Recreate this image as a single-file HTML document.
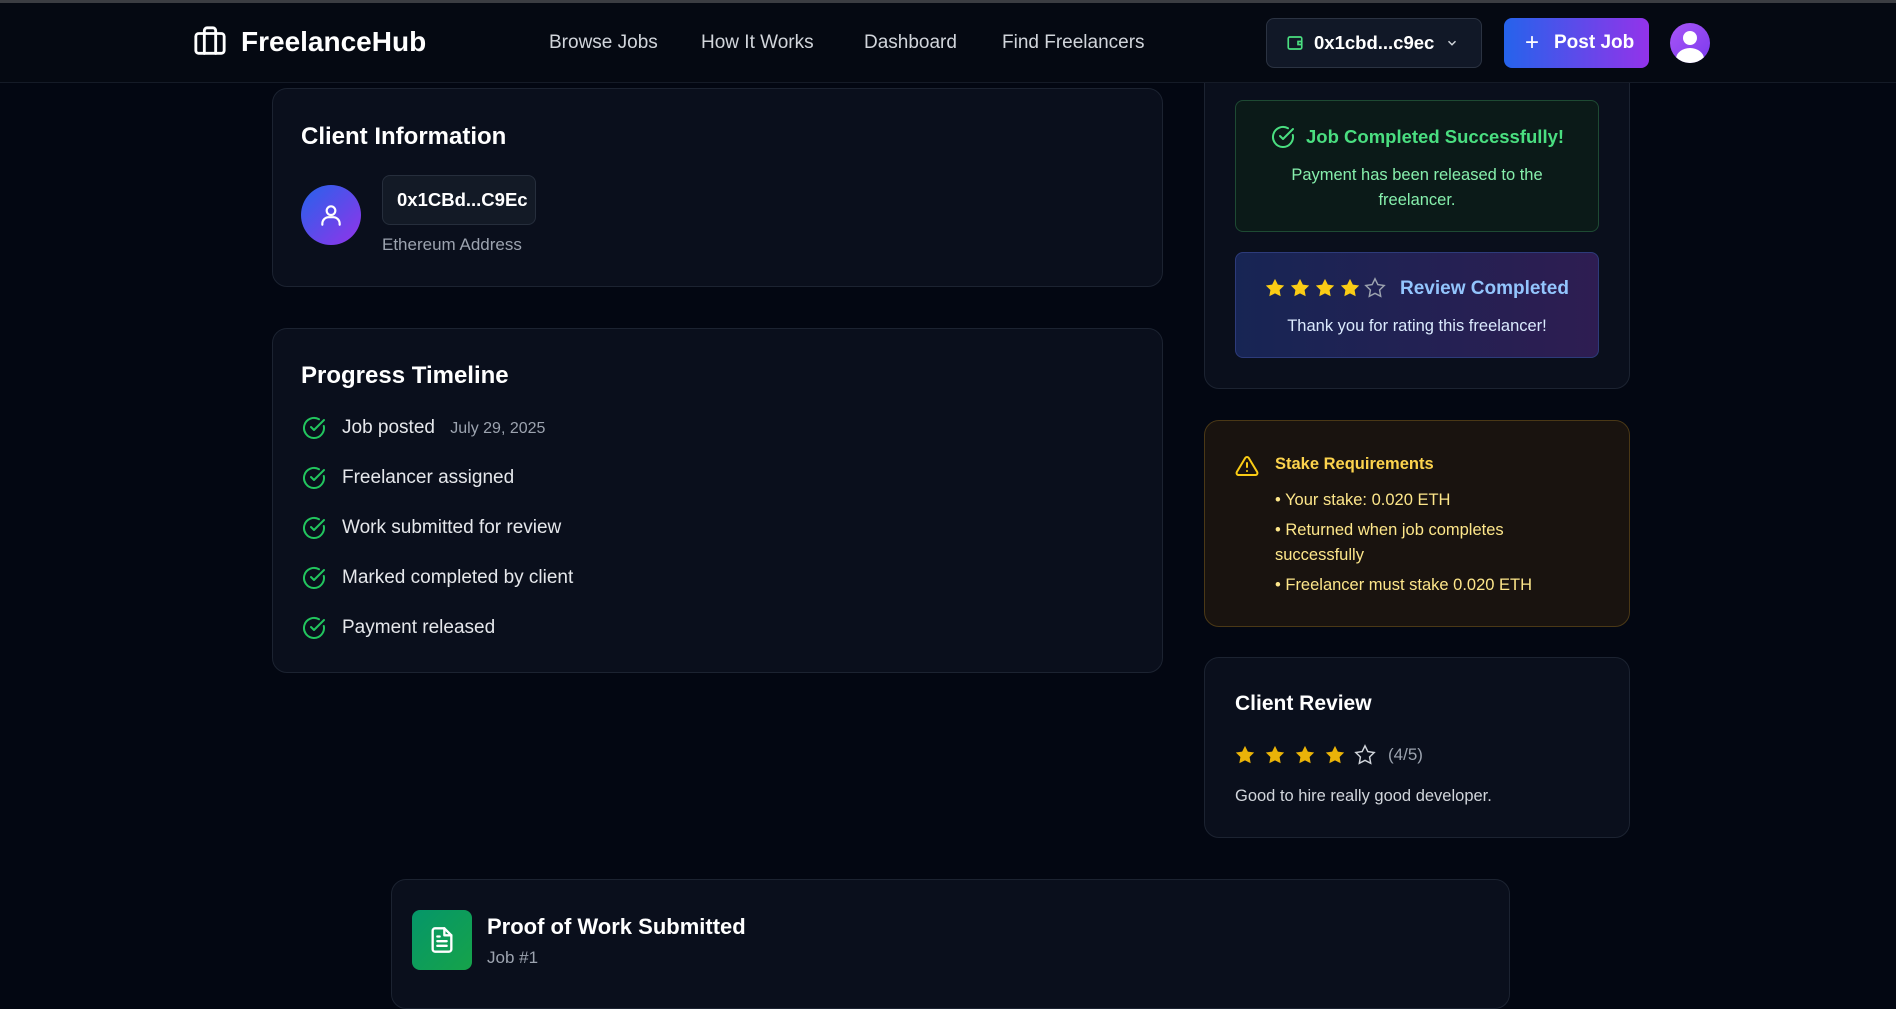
<!DOCTYPE html>
<html><head><meta charset="utf-8"><style>
*{box-sizing:border-box;margin:0;padding:0}
body{width:1896px;height:981px;overflow:hidden;background:#030712;font-family:"Liberation Sans",sans-serif;color:#e5e7eb;position:relative}
.a{position:absolute}
.card{position:absolute;background:#0a0f1c;border:1px solid #1c2331;border-radius:15px}
.t{position:absolute;white-space:nowrap}
#hdr{position:absolute;left:0;top:0;width:1896px;height:84px;z-index:10}
</style></head><body>
<svg width="0" height="0" style="position:absolute"><defs><symbol id="ck" viewBox="0 0 24 24"><path d="M21.8 10A10 10 0 1 1 17 3.3" fill="none" stroke="currentColor" stroke-width="2" stroke-linecap="round"/><path d="M9 11l3 3L22 4" fill="none" stroke="currentColor" stroke-width="2" stroke-linecap="round" stroke-linejoin="round"/></symbol><symbol id="st" viewBox="0 0 24 24"><path d="M12 2l3.1 6.3 6.9 1-5 4.9 1.2 6.8L12 17.8 5.8 21l1.2-6.8-5-4.9 6.9-1z"/></symbol></defs></svg>

<div class="card" style="left:272px;top:88px;width:891px;height:199px"></div>
<div class="t" style="left:301px;top:123px;font-size:24px;font-weight:bold;color:#fff">Client Information</div>
<div class="a" style="left:301px;top:185px;width:60px;height:60px;border-radius:50%;background:linear-gradient(135deg,#2563eb,#9333ea)"></div>
<svg class="a" style="left:318px;top:202px" width="26" height="26" viewBox="0 0 24 24" fill="none" stroke="#fff" stroke-width="2" stroke-linecap="round"><circle cx="12" cy="8" r="4"/><path d="M4 21v-1a6 6 0 0 1 6-6h4a6 6 0 0 1 6 6v1"/></svg>
<div class="a" style="left:382px;top:175px;width:154px;height:50px;background:#131a26;border:1px solid #262e3c;border-radius:8px"></div>
<div class="t" style="left:397px;top:189px;font-size:18.5px;font-weight:bold;color:#fff">0x1CBd...C9Ec</div>
<div class="t" style="left:382px;top:235px;font-size:17px;color:#9ca3af">Ethereum Address</div>

<div class="card" style="left:272px;top:328px;width:891px;height:345px"></div>
<div class="t" style="left:301px;top:362px;font-size:24px;font-weight:bold;color:#fff">Progress Timeline</div>
<svg class="a" style="left:302px;top:416px;color:#22c55e" width="24" height="24"><use href="#ck"/></svg>
<div class="t" style="left:342px;top:417px;font-size:19px;color:#e5e7eb">Job posted <span style="font-size:16px;color:#9ca3af;margin-left:10px">July 29, 2025</span></div>
<svg class="a" style="left:302px;top:466px;color:#22c55e" width="24" height="24"><use href="#ck"/></svg>
<div class="t" style="left:342px;top:467px;font-size:19px;color:#e5e7eb">Freelancer assigned</div>
<svg class="a" style="left:302px;top:516px;color:#22c55e" width="24" height="24"><use href="#ck"/></svg>
<div class="t" style="left:342px;top:517px;font-size:19px;color:#e5e7eb">Work submitted for review</div>
<svg class="a" style="left:302px;top:566px;color:#22c55e" width="24" height="24"><use href="#ck"/></svg>
<div class="t" style="left:342px;top:567px;font-size:19px;color:#e5e7eb">Marked completed by client</div>
<svg class="a" style="left:302px;top:616px;color:#22c55e" width="24" height="24"><use href="#ck"/></svg>
<div class="t" style="left:342px;top:617px;font-size:19px;color:#e5e7eb">Payment released</div>

<div class="card" style="left:1204px;top:40px;width:426px;height:349px"></div>
<div class="a" style="left:1235px;top:100px;width:364px;height:132px;background:#0b1a18;border:1px solid #1e4a33;border-radius:8px"></div>
<svg class="a" style="left:1271px;top:125px;color:#4ade80" width="24" height="24"><use href="#ck"/></svg>
<div class="t" style="left:1306px;top:126px;font-size:18.5px;font-weight:bold;color:#4ade80">Job Completed Successfully!</div>
<div class="a" style="left:1235px;top:163px;width:364px;text-align:center;font-size:16.5px;line-height:25px;color:#86efac">Payment has been released to the<br>freelancer.</div>
<div class="a" style="left:1235px;top:252px;width:364px;height:106px;background:linear-gradient(90deg,#172554,#2e1d52);border:1px solid #2d3b7a;border-radius:8px"></div>
<div class="a" style="left:1264px;top:277px;display:flex;gap:3px">
<svg width="22" height="22" fill="#facc15"><use href="#st"/></svg><svg width="22" height="22" fill="#facc15"><use href="#st"/></svg><svg width="22" height="22" fill="#facc15"><use href="#st"/></svg><svg width="22" height="22" fill="#facc15"><use href="#st"/></svg><svg width="22" height="22" fill="none" stroke="#9ca3af" stroke-width="1.6"><use href="#st"/></svg></div>
<div class="t" style="left:1400px;top:278px;font-size:19px;font-weight:bold;color:#93c5fd">Review Completed</div>
<div class="a" style="left:1235px;top:317px;width:364px;text-align:center;font-size:16.5px;color:#dbeafe">Thank you for rating this freelancer!</div>

<div class="a" style="left:1204px;top:420px;width:426px;height:207px;background:#19130f;border:1px solid #4a3816;border-radius:15px"></div>
<svg class="a" style="left:1235px;top:454px" width="24" height="24" viewBox="0 0 24 24" fill="none" stroke="#facc15" stroke-width="2" stroke-linecap="round" stroke-linejoin="round"><path d="M10.3 3.9L1.8 18a2 2 0 0 0 1.7 3h17a2 2 0 0 0 1.7-3L13.7 3.9a2 2 0 0 0-3.4 0z"/><path d="M12 9v4M12 17h.01"/></svg>
<div class="t" style="left:1275px;top:455px;font-size:16.5px;font-weight:bold;color:#fcd34d">Stake Requirements</div>
<div class="a" style="left:1275px;top:488px;font-size:16.5px;line-height:25px;color:#fde68a;width:300px">
<div>• Your stake: 0.020 ETH</div><div style="margin-top:5px">• Returned when job completes<br>successfully</div><div style="margin-top:5px">• Freelancer must stake 0.020 ETH</div></div>

<div class="card" style="left:1204px;top:657px;width:426px;height:181px"></div>
<div class="t" style="left:1235px;top:692px;font-size:21px;font-weight:bold;color:#fff">Client Review</div>
<div class="a" style="left:1234px;top:744px;display:flex;gap:8px;align-items:center">
<svg width="22" height="22" fill="#eab308"><use href="#st"/></svg><svg width="22" height="22" fill="#eab308"><use href="#st"/></svg><svg width="22" height="22" fill="#eab308"><use href="#st"/></svg><svg width="22" height="22" fill="#eab308"><use href="#st"/></svg><svg width="22" height="22" fill="none" stroke="#d1d5db" stroke-width="1.6"><use href="#st"/></svg>
<span style="font-size:17px;color:#9ca3af;margin-left:4px">(4/5)</span></div>
<div class="t" style="left:1235px;top:787px;font-size:16.5px;color:#d1d5db">Good to hire really good developer.</div>

<div class="card" style="left:391px;top:879px;width:1119px;height:130px"></div>
<div class="a" style="left:412px;top:910px;width:60px;height:60px;border-radius:8px;background:linear-gradient(135deg,#059669,#16a34a)"></div>
<svg class="a" style="left:428px;top:926px" width="28" height="28" viewBox="0 0 24 24" fill="none" stroke="#fff" stroke-width="2" stroke-linecap="round" stroke-linejoin="round"><path d="M14 2H6a2 2 0 0 0-2 2v16a2 2 0 0 0 2 2h12a2 2 0 0 0 2-2V8z"/><path d="M14 2v6h6M16 13H8M16 17H8M10 9H8"/></svg>
<div class="t" style="left:487px;top:914px;font-size:22px;font-weight:bold;color:#fff">Proof of Work Submitted</div>
<div class="t" style="left:487px;top:948px;font-size:17px;color:#9ca3af">Job #1</div>

<div id="hdr">
<div class="a" style="left:0;top:0;width:1896px;height:3px;background:#3b3d42"></div>
<div class="a" style="left:0;top:3px;width:1896px;height:80px;background:#050912;border-bottom:1px solid #151b27"></div>
<svg class="a" style="left:191px;top:25px" width="38" height="34" viewBox="0 0 24 24" fill="none" stroke="#fff" stroke-width="2" stroke-linecap="round" stroke-linejoin="round"><path d="M16 20V4a2 2 0 0 0-2-2h-4a2 2 0 0 0-2 2v16"/><rect x="2" y="6" width="20" height="14" rx="2"/></svg>
<div class="t" style="left:241px;top:26px;font-size:28px;font-weight:bold;color:#fff">FreelanceHub</div>
<div class="t" style="left:549px;top:32px;font-size:19px;color:#d1d5db">Browse Jobs</div>
<div class="t" style="left:701px;top:32px;font-size:19px;color:#d1d5db">How It Works</div>
<div class="t" style="left:864px;top:32px;font-size:19px;color:#d1d5db">Dashboard</div>
<div class="t" style="left:1002px;top:32px;font-size:19px;color:#d1d5db">Find Freelancers</div>
<div class="a" style="left:1266px;top:18px;width:216px;height:50px;background:#111827;border:1px solid #2b3342;border-radius:8px"></div>
<svg class="a" style="left:1286px;top:34px" width="18" height="18" viewBox="0 0 24 24" fill="none" stroke="#4ade80" stroke-width="2.2"><rect x="3" y="4" width="18" height="16" rx="2"/><path d="M21 10h-5v4h5"/></svg>
<div class="t" style="left:1314px;top:32px;font-size:18.5px;font-weight:bold;color:#fff">0x1cbd...c9ec</div>
<svg class="a" style="left:1445px;top:36px" width="14" height="14" viewBox="0 0 24 24" fill="none" stroke="#d1d5db" stroke-width="2.5"><path d="M6 9l6 6 6-6"/></svg>
<div class="a" style="left:1504px;top:18px;width:145px;height:50px;border-radius:8px;background:linear-gradient(90deg,#2563eb,#9333ea)"></div>
<div class="t" style="left:1525px;top:29px;font-size:24px;color:#fff">+</div>
<div class="t" style="left:1554px;top:32px;font-size:19px;font-weight:bold;color:#fff">Post Job</div>
<div class="a" style="left:1670px;top:23px;width:40px;height:40px;border-radius:50%;background:linear-gradient(135deg,#a855f7,#7c3aed);overflow:hidden">
<div class="a" style="left:13px;top:8px;width:14px;height:14px;border-radius:50%;background:#fff"></div>
<div class="a" style="left:6px;top:25px;width:28px;height:22px;border-radius:50%;background:#fff"></div></div>
</div>
</body></html>
